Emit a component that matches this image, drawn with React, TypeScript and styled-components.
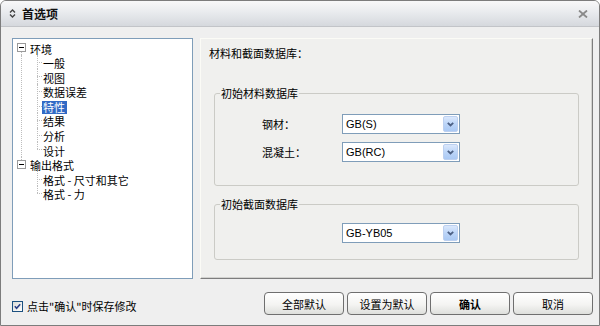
import React from "react";
import styled, { createGlobalStyle, css } from "styled-components";

const Global = createGlobalStyle`
  html, body { margin: 0; padding: 0; background: #ffffff; }
  body { font-family: "Liberation Sans", "Noto Sans CJK SC", sans-serif; }
  *, *::before, *::after { box-sizing: border-box; }
`;

const Window = styled.div`
  width: 600px;
  height: 326px;
  border: 1px solid #7c7c7c;
  border-radius: 6px 6px 0 0;
  background: #efefef;
  overflow: hidden;
  display: flex;
  flex-direction: column;
  font-size: 11px;
  color: #000;
`;

const TitleBar = styled.div`
  height: 26px;
  flex: none;
  display: flex;
  align-items: center;
  padding: 0 11px 0 8px;
  background: linear-gradient(#f8f8f9, #e9ebee 45%, #d5d8dd);
  border-bottom: 1px solid #c2c4c8;
`;

const TitleIcon = styled.svg`
  width: 7px;
  height: 9px;
  margin-right: 6px;
  flex: none;
`;

const TitleText = styled.span`
  font-family: "Noto Sans CJK SC", sans-serif;
  font-weight: bold;
  font-size: 12px;
  color: #111;
`;

const CloseIcon = styled.svg`
  margin-left: auto;
  width: 10px;
  height: 8px;
`;

const Body = styled.div`
  flex: 1;
  display: flex;
  flex-direction: column;
  padding: 11px 6px 0 11px;
`;

const Content = styled.div`
  display: flex;
  gap: 7px;
  height: 241px;
`;

const TreePanel = styled.div`
  width: 181px;
  flex: none;
  border: 1px solid #7f9db9;
  background: #ffffff;
  padding-top: 1px;
  font-family: "Noto Sans CJK SC", sans-serif;
`;

const dotV = css`
  content: "";
  position: absolute;
  border-left: 1px dotted #bdbdbd;
`;

const RootRow = styled.div<{ $lineAbove?: boolean; $lineBelow?: boolean }>`
  position: relative;
  height: 14.6px;
  line-height: 14.6px;
  padding-left: 17px;
  white-space: nowrap;
  ${(p) =>
    p.$lineAbove &&
    css`
      &::before {
        ${dotV};
        left: 8px;
        top: 0;
        height: 50%;
      }
    `}
  ${(p) =>
    p.$lineBelow &&
    css`
      &::after {
        ${dotV};
        left: 8px;
        top: 50%;
        bottom: 0;
      }
    `}
`;

const Expander = styled.span`
  position: absolute;
  left: 4px;
  top: 3px;
  width: 9px;
  height: 9px;
  border: 1px solid #9a9a9a;
  background: #ffffff;
  z-index: 1;
  &::after {
    content: "";
    position: absolute;
    left: 1px;
    top: 3px;
    width: 5px;
    height: 1px;
    background: #000;
  }
`;

const ChildList = styled.div<{ $trunk?: boolean }>`
  position: relative;
  ${(p) =>
    p.$trunk &&
    css`
      &::before {
        ${dotV};
        left: 8px;
        top: 0;
        bottom: 0;
      }
    `}
`;

const ChildRow = styled.div<{ $last?: boolean }>`
  position: relative;
  height: 14.6px;
  line-height: 14.6px;
  padding-left: 30px;
  white-space: nowrap;
  &::before {
    ${dotV};
    left: 24px;
    top: 0;
    height: ${(p) => (p.$last ? "50%" : "100%")};
  }
  &::after {
    content: "";
    position: absolute;
    left: 24px;
    top: 50%;
    width: 5px;
    border-top: 1px dotted #bdbdbd;
  }
`;

const NodeLabel = styled.span<{ $selected?: boolean }>`
  display: inline-block;
  line-height: 13px;
  padding: 0 1.5px;
  margin-left: -1.5px;
  vertical-align: middle;
  background: ${(p) => (p.$selected ? "#316ac5" : "transparent")};
  color: ${(p) => (p.$selected ? "#ffffff" : "#000000")};
`;

const RightPanel = styled.div`
  flex: 1;
  display: flex;
  flex-direction: column;
  border-top: 1px solid #fbfbf6;
  border-left: 1px solid #fbfbf6;
  border-right: 1px solid #7d7d7d;
  border-bottom: 1px solid #7d7d7d;
  box-shadow: inset -1px -1px 0 #d2d2cf;
  background: #f0f0ee;
  padding-top: 7px;
  font-family: "Noto Sans CJK SC", sans-serif;
`;

const Heading = styled.div`
  padding-left: 8px;
  height: 14px;
  line-height: 14px;
`;

const Group = styled.fieldset<{ $top: number; $pt: number; $pb: number }>`
  min-width: 0;
  margin: ${(p) => p.$top}px 13px 0;
  padding: ${(p) => p.$pt}px 0 ${(p) => p.$pb}px;
  border: 1px solid #cbcbc6;
  border-radius: 3px;
`;

const Legend = styled.legend`
  margin-left: 5px;
  padding: 0 1px;
  line-height: 14px;
  height: 14px;
`;

const Rows = styled.div`
  display: flex;
  flex-direction: column;
  gap: 8px;
`;

const FieldRow = styled.div<{ $indent: number }>`
  display: flex;
  align-items: center;
  height: 20px;
  padding-left: ${(p) => p.$indent}px;
`;

const FieldLabel = styled.span`
  width: 80px;
  flex: none;
`;

const Combo = styled.div`
  width: 118px;
  height: 20px;
  flex: none;
  display: flex;
  align-items: center;
  border: 1px solid #7f9db9;
  background: #ffffff;
  padding: 0 1px 0 3px;
`;

const ComboText = styled.span`
  flex: 1;
  font-family: "Liberation Sans", sans-serif;
  font-size: 11px;
`;

const ComboArrow = styled.span`
  width: 15px;
  height: 16px;
  display: grid;
  place-items: center;
  border: 1px solid #bcd0f0;
  border-radius: 2px;
  background: linear-gradient(#dbe8fc, #bcd5f8 50%, #aac9f4);
`;

const Footer = styled.div`
  margin-top: 13px;
  height: 23px;
  display: flex;
  align-items: center;
  font-family: "Noto Sans CJK SC", sans-serif;
`;

const CheckLabel = styled.label`
  display: flex;
  align-items: center;
  gap: 4px;
  margin-top: 5px;
`;

const CheckBox = styled.span`
  width: 11px;
  height: 11px;
  border: 1px solid #1c5180;
  background: linear-gradient(135deg, #dcdcd7, #ffffff);
  display: grid;
  place-items: center;
`;

const ButtonRow = styled.div`
  margin-left: auto;
  display: flex;
  gap: 3px;
`;

const Button = styled.button<{ $primary?: boolean }>`
  width: 80px;
  height: 23px;
  padding: 0;
  border: 1px solid #6f6f6f;
  border-radius: 4px;
  background: linear-gradient(#ffffff, #f4f4f2 55%, #dedfdc);
  font-family: "Noto Sans CJK SC", sans-serif;
  font-size: 11px;
  font-weight: ${(p) => (p.$primary ? "bold" : "normal")};
  color: #000;
`;

const Chevron = () => (
  <svg width="7" height="5" viewBox="0 0 7 5">
    <polyline points="0.8,0.8 3.5,3.5 6.2,0.8" fill="none" stroke="#4d6185" strokeWidth="1.8" />
  </svg>
);

const ComboBox = ({ value }: { value: string }) => (
  <Combo>
    <ComboText>{value}</ComboText>
    <ComboArrow>
      <Chevron />
    </ComboArrow>
  </Combo>
);

export default function App() {
  return (
    <>
      <Global />
      <Window>
        <TitleBar>
          <TitleIcon viewBox="0 0 7 9">
            <polyline points="1,3.5 3.5,1 6,3.5" fill="none" stroke="#444" strokeWidth="1.4" />
            <polyline points="1,5.5 3.5,8 6,5.5" fill="none" stroke="#444" strokeWidth="1.4" />
          </TitleIcon>
          <TitleText>首选项</TitleText>
          <CloseIcon viewBox="0 0 10 8">
            <line x1="1" y1="0.5" x2="9" y2="7.5" stroke="#8a8a8a" strokeWidth="1.8" />
            <line x1="9" y1="0.5" x2="1" y2="7.5" stroke="#8a8a8a" strokeWidth="1.8" />
          </CloseIcon>
        </TitleBar>
        <Body>
          <Content>
            <TreePanel>
              <RootRow $lineBelow>
                <Expander />
                <NodeLabel>环境</NodeLabel>
              </RootRow>
              <ChildList $trunk>
                <ChildRow><NodeLabel>一般</NodeLabel></ChildRow>
                <ChildRow><NodeLabel>视图</NodeLabel></ChildRow>
                <ChildRow><NodeLabel>数据误差</NodeLabel></ChildRow>
                <ChildRow><NodeLabel $selected>特性</NodeLabel></ChildRow>
                <ChildRow><NodeLabel>结果</NodeLabel></ChildRow>
                <ChildRow><NodeLabel>分析</NodeLabel></ChildRow>
                <ChildRow $last><NodeLabel>设计</NodeLabel></ChildRow>
              </ChildList>
              <RootRow $lineAbove>
                <Expander />
                <NodeLabel>输出格式</NodeLabel>
              </RootRow>
              <ChildList>
                <ChildRow><NodeLabel>格式 - 尺寸和其它</NodeLabel></ChildRow>
                <ChildRow $last><NodeLabel>格式 - 力</NodeLabel></ChildRow>
              </ChildList>
            </TreePanel>
            <RightPanel>
              <Heading>材料和截面数据库：</Heading>
              <Group $top={26} $pt={14} $pb={23}>
                <Legend>初始材料数据库</Legend>
                <Rows>
                  <FieldRow $indent={47}>
                    <FieldLabel>钢材：</FieldLabel>
                    <ComboBox value="GB(S)" />
                  </FieldRow>
                  <FieldRow $indent={47}>
                    <FieldLabel>混凝土：</FieldLabel>
                    <ComboBox value="GB(RC)" />
                  </FieldRow>
                </Rows>
              </Group>
              <Group $top={11} $pt={12} $pb={16}>
                <Legend>初始截面数据库</Legend>
                <FieldRow $indent={127}>
                  <ComboBox value="GB-YB05" />
                </FieldRow>
              </Group>
            </RightPanel>
          </Content>
          <Footer>
            <CheckLabel>
              <CheckBox>
                <svg width="7" height="7" viewBox="0 0 7 7">
                  <polyline points="0.8,3.3 2.6,5.3 6.2,1.2" fill="none" stroke="#2b3f86" strokeWidth="1.6" />
                </svg>
              </CheckBox>
              点击"确认"时保存修改
            </CheckLabel>
            <ButtonRow>
              <Button>全部默认</Button>
              <Button>设置为默认</Button>
              <Button $primary>确认</Button>
              <Button>取消</Button>
            </ButtonRow>
          </Footer>
        </Body>
      </Window>
    </>
  );
}
